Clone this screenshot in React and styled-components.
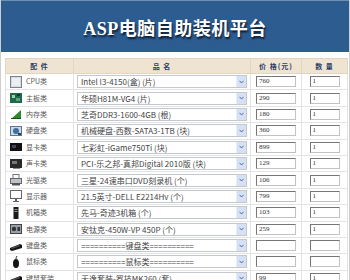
import styled, { createGlobalStyle } from 'styled-components';

const GlobalStyle = createGlobalStyle`
  html, body {
    margin: 0;
    padding: 0;
    background: #fff;
  }
`;

const parts = [
  { kind: 'cpu', label: 'CPU类', name: 'Intel I3-4150(盒) (片)', price: '760', qty: '1' },
  { kind: 'board', label: '主板类', name: '华硕H81M-VG4 (片)', price: '290', qty: '1' },
  { kind: 'memory', label: '内存类', name: '芝奇DDR3-1600-4GB (根)', price: '180', qty: '1' },
  { kind: 'disk', label: '硬盘类', name: '机械硬盘-西数-SATA3-1TB (块)', price: '360', qty: '1' },
  { kind: 'gpu', label: '显卡类', name: '七彩虹-iGame750Ti (块)', price: '899', qty: '1' },
  { kind: 'sound', label: '声卡类', name: 'PCI-乐之邦-真邦Digital 2010版 (块)', price: '129', qty: '1' },
  { kind: 'drive', label: '光驱类', name: '三星-24速串口DVD刻录机 (个)', price: '106', qty: '1' },
  { kind: 'monitor', label: '显示器', name: '21.5英寸-DELL E2214Hv (个)', price: '799', qty: '1' },
  { kind: 'case', label: '机箱类', name: '先马-奇迹3机箱 (个)', price: '103', qty: '1' },
  { kind: 'power', label: '电源类', name: '安钛克-450W-VP 450P (个)', price: '259', qty: '1' },
  { kind: 'keyboard', label: '键盘类', name: '==========键盘类==========', price: '', qty: '' },
  { kind: 'mouse', label: '鼠标类', name: '==========鼠标类==========', price: '', qty: '' },
  { kind: 'keyboard', label: '键鼠套装', name: '天逸套装-罗技MK260 (套)', price: '99', qty: '1' },
];

function PartIcon({ kind }) {
  switch (kind) {
    case 'cpu':
      return (
        <svg width="12" height="12" viewBox="0 0 12 12">
          <rect x="0.5" y="0.5" width="11" height="11" fill="#d9dce3" stroke="#7d828c" />
          <rect x="2" y="2" width="8" height="8" fill="#eceef2" />
        </svg>
      );
    case 'board':
      return (
        <svg width="12" height="12" viewBox="0 0 12 12">
          <rect x="0" y="1" width="12" height="10" fill="#1f6a4a" />
          <rect x="2" y="3" width="3" height="3" fill="#9fd0b0" />
          <rect x="7" y="2" width="3" height="2" fill="#0d3a26" />
          <rect x="6" y="6" width="4" height="3" fill="#5aa37c" />
        </svg>
      );
    case 'memory':
      return (
        <svg width="12" height="12" viewBox="0 0 12 12">
          <polygon points="1,11 11,2 11,11" fill="#2f8a2f" />
          <rect x="1" y="10" width="10" height="1" fill="#145214" />
        </svg>
      );
    case 'disk':
      return (
        <svg width="12" height="12" viewBox="0 0 12 12">
          <rect x="0.5" y="1.5" width="11" height="9" fill="#c9d6e6" stroke="#5d7592" />
          <circle cx="6" cy="6" r="3" fill="#3f6d9e" />
          <rect x="8" y="8" width="3" height="2" fill="#2c3e55" />
        </svg>
      );
    case 'gpu':
      return (
        <svg width="12" height="12" viewBox="0 0 12 12">
          <rect x="0" y="2" width="12" height="8" fill="#111" />
          <rect x="2" y="4" width="4" height="3" fill="#445" />
        </svg>
      );
    case 'sound':
      return (
        <svg width="12" height="12" viewBox="0 0 12 12">
          <rect x="0" y="1" width="12" height="9" fill="#2a2a2a" />
          <rect x="2" y="3" width="5" height="3" fill="#777" />
          <rect x="3" y="10" width="7" height="1" fill="#888" />
        </svg>
      );
    case 'drive':
      return (
        <svg width="12" height="12" viewBox="0 0 12 12">
          <rect x="3" y="0.5" width="6" height="4" fill="#fff" stroke="#777" />
          <rect x="0.5" y="4.5" width="11" height="5" fill="#bfc3c9" stroke="#666" />
          <rect x="2" y="9" width="8" height="2.5" fill="#555" />
        </svg>
      );
    case 'monitor':
      return (
        <svg width="12" height="12" viewBox="0 0 12 12">
          <rect x="0.5" y="0.5" width="11" height="8" fill="#fff" stroke="#666" />
          <rect x="5" y="9" width="2" height="2" fill="#666" />
          <rect x="3" y="11" width="6" height="1" fill="#666" />
        </svg>
      );
    case 'case':
      return (
        <svg width="12" height="12" viewBox="0 0 12 12">
          <rect x="3.5" y="0" width="5" height="12" fill="#1a1a1a" />
          <rect x="4.5" y="2" width="3" height="1" fill="#999" />
          <rect x="4.5" y="4" width="3" height="1" fill="#999" />
        </svg>
      );
    case 'power':
      return (
        <svg width="12" height="12" viewBox="0 0 12 12">
          <rect x="0.5" y="1.5" width="11" height="9" fill="#9aa0a8" stroke="#444" />
          <circle cx="4" cy="6" r="2.2" fill="#333" />
          <rect x="7.5" y="4" width="2.5" height="4" fill="#333" />
        </svg>
      );
    case 'keyboard':
      return (
        <svg width="12" height="12" viewBox="0 0 12 12">
          <polygon points="0,8 10,4 12,5 12,8 2,11 0,10" fill="#151515" />
          <polygon points="1,8 9,5 10,6 2,9" fill="#555" />
        </svg>
      );
    case 'mouse':
      return (
        <svg width="12" height="12" viewBox="0 0 12 12">
          <ellipse cx="6" cy="7.5" rx="3" ry="4.5" fill="#151515" />
          <path d="M6 3 Q6 1 7 0" stroke="#333" fill="none" />
        </svg>
      );
    default:
      return null;
  }
}

export default function App() {
  return (
    <Page>
      <GlobalStyle />
      <Header>
        <Title>ASP电脑自助装机平台</Title>
      </Header>
      <Body>
        <PartsTable>
          <colgroup>
            <col style={{ width: 68 }} />
            <col style={{ width: 177 }} />
            <col style={{ width: 51 }} />
            <col style={{ width: 46 }} />
          </colgroup>
          <thead>
            <HeadRow>
              <HeadCell>配 件</HeadCell>
              <HeadCell>品 名</HeadCell>
              <HeadCell>价 格(元)</HeadCell>
              <HeadCell>数 量</HeadCell>
            </HeadRow>
          </thead>
          <tbody>
            {parts.map((part, i) => (
              <Row key={i}>
                <Cell>
                  <Label>
                    <PartIcon kind={part.kind} />
                    <span>{part.label}</span>
                  </Label>
                </Cell>
                <Cell>
                  <Select>
                    <SelectText>{part.name}</SelectText>
                    <Arrow>
                      <svg width="5" height="4" viewBox="0 0 5 4">
                        <path d="M0.5 0.8 L2.5 3 L4.5 0.8" stroke="#4d6f9e" strokeWidth="1" fill="none" />
                      </svg>
                    </Arrow>
                  </Select>
                </Cell>
                <Cell $center>
                  <Field $width={40}>{part.price}</Field>
                </Cell>
                <Cell $center>
                  <Field $width={30}>{part.qty}</Field>
                </Cell>
              </Row>
            ))}
          </tbody>
        </PartsTable>
      </Body>
    </Page>
  );
}

const Page = styled.div`
  width: 350px;
  height: 280px;
  box-sizing: border-box;
  overflow: hidden;
  border-left: 1px solid #cfcfcf;
  border-right: 1px solid #cfcfcf;
  background: #fff;
`;

const Header = styled.header`
  height: 52px;
  margin: 0 -1px;
  background: #2d5c91;
  display: flex;
  align-items: center;
  justify-content: center;
  border-top: 1px solid #6f8fb5;
  box-sizing: border-box;
`;

const Title = styled.h1`
  margin: 0;
  color: #fff;
  font-family: 'Liberation Serif', 'Noto Sans CJK SC', serif;
  font-size: 18px;
  font-weight: bold;
  text-shadow: 1px 2px 2px #0b1a2c;
  letter-spacing: 0.5px;
`;

const Body = styled.div`
  padding: 6px 2px 0 4px;
`;

const PartsTable = styled.table`
  width: 342px;
  table-layout: fixed;
  border-collapse: collapse;
  font-family: 'Noto Sans CJK SC', sans-serif;
  font-size: 7px;
  line-height: 1;
`;

const HeadRow = styled.tr`
  height: 15px;
  background: #efe4d1;
`;

const HeadCell = styled.th`
  padding: 0;
  border: 1px solid #e2d6c0;
  color: #2b3d66;
  font-size: 7px;
  font-weight: bold;
  text-align: center;
  letter-spacing: 1px;
`;

const Row = styled.tr`
  height: 16.4px;
`;

const Cell = styled.td`
  padding: 0 3px;
  border: 1px solid #e3e3e3;
  vertical-align: middle;
  text-align: ${p => (p.$center ? 'center' : 'left')};
`;

const Label = styled.div`
  display: flex;
  align-items: center;
  gap: 4px;
  padding-left: 1px;
  color: #5a5a5a;
  font-size: 7px;
  white-space: nowrap;

  svg {
    flex: none;
  }
`;

const Select = styled.div`
  height: 11px;
  display: flex;
  align-items: center;
  border: 1px solid #c4c8cf;
  background: #fff;
  padding-left: 3px;
  overflow: hidden;
`;

const SelectText = styled.span`
  flex: 1;
  font-size: 8px;
  color: #444;
  white-space: nowrap;
  overflow: hidden;
  line-height: 11px;
`;

const Arrow = styled.span`
  flex: none;
  width: 9px;
  height: 11px;
  display: flex;
  align-items: center;
  justify-content: center;
  background: #d6e2f3;
  border-left: 1px solid #e8eef8;
`;

const Field = styled.div`
  display: inline-block;
  vertical-align: middle;
  width: ${p => p.$width}px;
  height: 11px;
  box-sizing: border-box;
  border: 1px solid;
  border-color: #767676 #c2c2c2 #c2c2c2 #767676;
  padding-left: 2px;
  font-family: 'Liberation Serif', serif;
  font-size: 7px;
  line-height: 9px;
  color: #333;
  text-align: left;
  background: #fff;
`;
